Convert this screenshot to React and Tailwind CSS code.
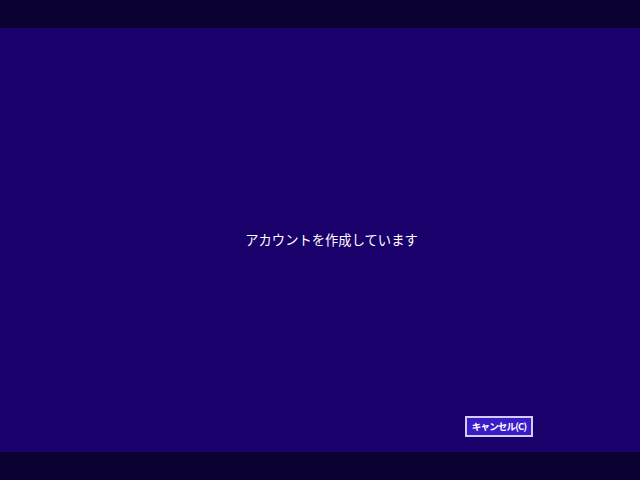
import React from 'react';

export default function App() {
  return (
    <div className="flex h-[480px] w-[640px] flex-col overflow-hidden bg-[#19006b]" style={{ fontFamily: '"Noto Sans CJK JP", "Noto Sans", sans-serif' }}>
      <div className="h-[28px] bg-[#0a0132]" />
      <div className="relative flex flex-1 items-center justify-center">
        <p className="pl-[23px] text-[13.3px] leading-none text-white">アカウントを作成しています</p>
        <button
          type="button"
          className="absolute right-[107px] top-[388px] flex h-[21px] w-[68px] items-center justify-center whitespace-nowrap border-2 border-[#d4ccf6] bg-[#3a1cc8] text-[9.5px] font-bold leading-none tracking-[-0.8px] text-white"
        >
          キャンセル(C)
        </button>
      </div>
      <div className="h-[28px] bg-[#0a0132]" />
    </div>
  );
}
